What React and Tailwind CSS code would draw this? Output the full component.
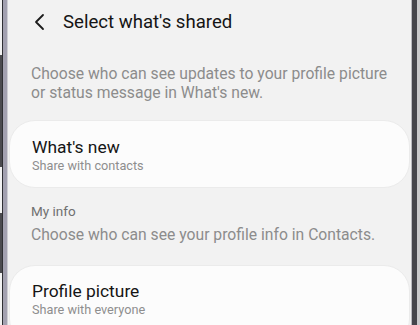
import React from "react";

function Chevron() {
  return (
    <svg width="14" height="18" viewBox="0 0 14 18" fill="none" className="block">
      <polyline points="10,2 3,9 10,16" stroke="#1c1c1c" strokeWidth="1.8" strokeLinecap="round" strokeLinejoin="round" />
    </svg>
  );
}

function Card({ title, sub, pt }) {
  return (
    <div className={`mx-[1px] rounded-[26px] bg-[#fcfcfc] border border-[#ebebeb] pl-[22px] ${pt}`}>
      <div className="text-[17.4px] leading-[20px] text-[#151515]">{title}</div>
      <div className="text-[12.7px] leading-[17px] text-[#8e8e8e]">{sub}</div>
    </div>
  );
}

export default function App() {
  return (
    <div className="flex w-[420px] h-[325px] overflow-hidden bg-[#f2f2f2] font-['Roboto',sans-serif]">
      {/* left phone edge */}
      <div className="flex w-[8px] shrink-0">
        <div className="w-[2px] flex flex-col">
          <div className="h-[55px]" />
          <div className="h-[112px] bg-[#4a4a4e]" />
          <div className="h-[46px]" />
          <div className="h-[60px] bg-[#4a4a4e]" />
        </div>
        <div className="w-[1px] bg-[#2f2f33]" />
        <div className="w-[4px] bg-[#a3a1b0]" />
        <div className="w-[1px] bg-[#cfcfd4]" />
      </div>

      {/* screen */}
      <div className="flex-1 flex flex-col bg-[#f2f2f2]">
        <div className="flex items-center pt-[10px] h-[34px]">
          <div className="ml-[25px] w-[30px] flex items-center">
            <Chevron />
          </div>
          <div className="text-[18.6px] leading-[24px] text-[#151515]">Select what's shared</div>
        </div>

        <div className="mt-[30px] pl-[23px] text-[15.7px] leading-[19px] text-[#8c8c8c]">
          Choose who can see updates to your profile picture
          <br />
          or status message in What's new.
        </div>

        <div className="mt-[18px] h-[68px]">
          <Card title="What's new" sub="Share with contacts" pt="pt-[16px] h-[68px]" />
        </div>

        <div className="mt-[15px] pl-[23px] text-[13.5px] leading-[17px] text-[#707070]">My info</div>
        <div className="mt-[5px] pl-[23px] text-[15.7px] leading-[19px] text-[#8c8c8c]">
          Choose who can see your profile info in Contacts.
        </div>

        <div className="mt-[21px]">
          <Card title="Profile picture" sub="Share with everyone" pt="pt-[15px] h-[80px]" />
        </div>
      </div>

      {/* right phone edge */}
      <div className="flex w-[9px] shrink-0">
        <div className="w-[1px] bg-[#b9b9c0]" />
        <div className="w-[5px] bg-[#45454c]" />
        <div className="w-[3px] bg-[#c9c9cc]" />
      </div>
    </div>
  );
}
